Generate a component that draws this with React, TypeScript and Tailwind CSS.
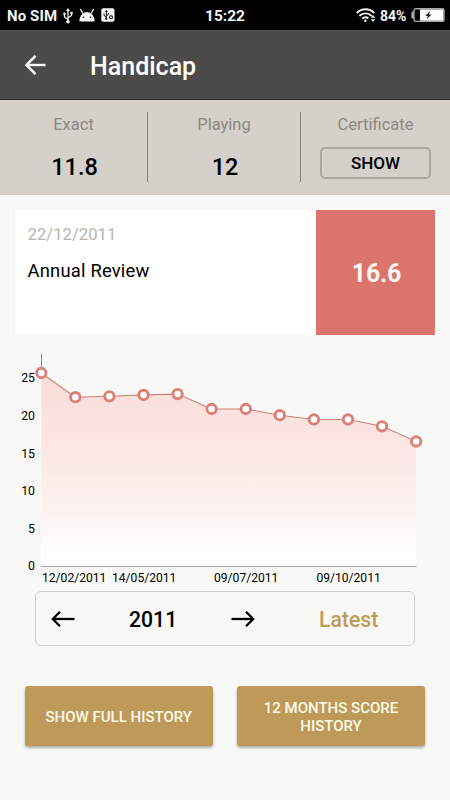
import React from 'react';

const points = [
  [41.3, 373], [75.3, 397.2], [109.4, 396.3], [143.5, 394.9], [177.6, 394.1], [211.6, 409],
  [245.8, 409], [279.8, 415.2], [313.9, 419.5], [348, 419.5], [382, 426.3], [416.2, 441.5],
];
const line = points.map((p) => `${p[0]},${p[1]}`).join(' ');
const yLabels: [string, number][] = [['25', 377.5], ['20', 415.5], ['15', 453.2], ['10', 490.7], ['5', 528.2], ['0', 565.7]];
const xLabels: [string, number][] = [['12/02/2011', 74.2], ['14/05/2011', 144.2], ['09/07/2011', 246.2], ['09/10/2011', 348.6]];

function Arrow({ className = '', width = 24, stroke = 2 }: { className?: string; width?: number; stroke?: number }) {
  return (
    <svg width={width} height="20" viewBox={`0 0 ${width} 20`} fill="none" stroke="currentColor" strokeWidth={stroke} className={className}>
      <path d={`M${width - 0.5} 10H2`} />
      <path d={width > 21 ? 'M9 2.8L1.8 10L9 17.2' : 'M10.5 0.8L1.5 10L10.5 19.2'} />
    </svg>
  );
}

function StatusBar() {
  return (
    <div className="flex h-[30px] items-center bg-black text-[15px] leading-[30px] font-bold text-[#f4f4f4]">
      <div className="flex w-[205px] items-center pl-[7px]">
        <span className="w-[56px] pt-[2px] text-[15px] tracking-[0.1px] whitespace-nowrap">No SIM</span>
        <svg width="10" height="16" viewBox="0 0 10 16" className="mt-px" fill="none" stroke="currentColor" strokeWidth="1.3">
          <path d="M5 14V2M5 11.5L1.5 9V6M5 10L8.5 7.5V5" />
          <path d="M5 0L7 3H3Z" fill="currentColor" stroke="none" />
          <circle cx="5" cy="13.8" r="1.8" fill="currentColor" stroke="none" />
          <circle cx="1.5" cy="5.8" r="1.3" fill="currentColor" stroke="none" />
          <path d="M7.3 3.8h2.4v2.4H7.3z" fill="currentColor" stroke="none" />
        </svg>
        <svg width="16" height="14" viewBox="0 0 16 14" className="ml-[6px]" fill="currentColor">
          <path d="M0.3 13.5A7.7 9.6 0 0 1 15.7 13.5Z" />
          <path d="M1.3 1L4 5.5M14.7 1L12 5.5" stroke="currentColor" strokeWidth="1.3" />
          <circle cx="4.5" cy="9.3" r="0.8" fill="#000" />
          <circle cx="11.5" cy="9.3" r="0.8" fill="#000" />
        </svg>
        <svg width="14" height="14" viewBox="0 0 14 14" className="ml-[6px]" fill="none">
          <rect x="0.3" y="0.3" width="13.2" height="13.4" rx="1.8" fill="#f4f4f4" />
          <path d="M5.3 11V3M5.3 9L3 7.4V5.5M5.3 8L7.3 6.5V5" stroke="#111" strokeWidth="1" />
          <path d="M5.3 1.8L6.7 4H3.9Z" fill="#111" />
          <circle cx="5.3" cy="10.7" r="1.1" fill="#111" />
          <circle cx="10" cy="9.2" r="1.5" stroke="#111" strokeWidth="1.1" />
        </svg>
      </div>
      <span className="w-[151px] pt-[2px] text-[15.5px]">15:22</span>
      <svg width="21" height="15" viewBox="0 0 21 15" fill="none" stroke="currentColor" strokeWidth="1.9">
        <path d="M0.8 5A12 12 0 0 1 18.2 5M3.4 8A8.5 8.5 0 0 1 15.6 8M6.2 10.7A4.8 4.8 0 0 1 12.4 10.3" />
        <circle cx="9.4" cy="12.8" r="1.3" fill="currentColor" stroke="none" />
        <path d="M17 7L19.3 9.8H14.7ZM17 14L14.7 11.2H19.3Z" fill="currentColor" stroke="none" />
      </svg>
      <span className="ml-[3px] w-[30px] pt-[2px] text-[14px] whitespace-nowrap">84%</span>
      <svg width="34" height="14" viewBox="0 0 34 14" className="ml-px" fill="none">
        <path d="M2.5 4H1V10H2.5" fill="#bbb" stroke="#bbb" />
        <rect x="3" y="0.8" width="30" height="12.6" rx="1.8" stroke="#aaa" strokeWidth="1.4" />
        <path d="M9 1.5H32.3V12.7H9Z" fill="#fff" />
        <path d="M19.2 3L14.2 7.8H17L15.5 11.2L20.6 6.4H17.8Z" fill="#111" />
      </svg>
    </div>
  );
}

function Stat({ label, value }: { label: string; value: string }) {
  return (
    <div className="flex flex-col items-center">
      <span className="mt-[3px] text-[16.5px] leading-[20px] text-[#8b8882]">{label}</span>
      <span className="mt-[18px] ml-[2px] text-[23.5px] leading-[28px] font-medium">{value}</span>
    </div>
  );
}

function Chart() {
  return (
    <svg width="450" height="240" viewBox="0 350 450 240" className="block" fontFamily="Roboto, sans-serif" fontSize="12.3">
      <defs>
        <linearGradient id="area" x1="0" y1="373" x2="0" y2="566" gradientUnits="userSpaceOnUse">
          <stop offset="0" stopColor="#fadcd7" />
          <stop offset="0.5" stopColor="#fceae8" />
          <stop offset="0.75" stopColor="#fdf5f3" />
          <stop offset="0.94" stopColor="#ffffff" />
        </linearGradient>
      </defs>
      <path d="M41.5 354V373" stroke="#888" />
      <polygon points={`41.3,566 ${line} 416.2,566`} fill="url(#area)" />
      <path d="M41 566.5H416.5" stroke="#a5a5a5" />
      <polyline points={line} fill="none" stroke="#cf8077" strokeWidth="1.1" />
      {points.map(([x, y]) => <circle key={x} cx={x} cy={y} r="4.7" fill="#fff" stroke="#db8078" strokeWidth="2.9" />)}
      {yLabels.map(([t, y]) => <text key={t} x="35" y={y + 4.4} textAnchor="end">{t}</text>)}
      {xLabels.map(([t, x]) => <text key={t} x={x} y="581.7" fontSize="12.1" textAnchor="middle">{t}</text>)}
    </svg>
  );
}

export default function App() {
  return (
    <div className="h-[800px] w-[450px] overflow-hidden bg-[#f8f8f6] font-['Roboto',sans-serif] text-black">
      <StatusBar />
      <header className="flex h-[70px] items-center border-b border-[#292927] bg-[#4b4b49] pl-[25px] text-white">
        <Arrow width={21} stroke={2.4} />
        <h1 className="mt-[5px] ml-[44px] text-[25px] leading-[30px] font-medium">Handicap</h1>
      </header>
      <section className="grid h-[95px] grid-cols-[147px_154px_149px] bg-[#d5d1ca] pt-[12px]">
        <div className="h-[75px]"><Stat label="Exact" value="11.8" /></div>
        <div className="h-[70px] border-x border-[#85827d]"><Stat label="Playing" value="12" /></div>
        <div className="flex flex-col items-center">
          <span className="mt-[3px] text-[16.5px] leading-[20px] text-[#8b8882]">Certificate</span>
          <button className="mt-[12px] h-[32px] w-[111px] rounded-[5px] border-2 border-[#aaa7a1] pt-[2px] text-[17px] font-medium">SHOW</button>
        </div>
      </section>
      <section className="mx-[15px] mt-[15px] flex h-[125px] bg-white">
        <div className="w-[301px] pt-[15px] pl-[12.5px]">
          <div className="text-[16.7px] leading-[20px] text-[#b8b5af]">22/12/2011</div>
          <div className="mt-[15px] text-[18.4px] leading-[22px] tracking-[0.2px]">Annual Review</div>
        </div>
        <div className="flex flex-1 items-center justify-center bg-[#db756c] pt-[2px] pl-[2px] text-[25px] font-bold tracking-[-0.2px] text-[#fff7f2]">16.6</div>
      </section>
      <div className="mt-[15px]"><Chart /></div>
      <nav className="mt-px ml-[35px] flex h-[55px] w-[380px] items-center rounded-[6px] border-[1.5px] border-[#cfcfcd] pl-[15px] text-[21.2px] font-medium">
        <Arrow stroke={2.3} />
        <span className="ml-[54px] w-[48px] pt-[3px]">2011</span>
        <Arrow className="ml-[54px] rotate-180" stroke={2.3} />
        <span className="ml-[64px] pt-[3px] text-[#bd9b59]">Latest</span>
      </nav>
      <div className="mt-[40px] flex gap-[24.5px] pl-[25px] text-[15px] leading-[17.5px] font-medium text-[#fffbe9]">
        <button className="h-[60px] w-[187.5px] rounded-[3px] bg-[#be9959] pt-[3px] shadow-[0_2px_3px_rgba(0,0,0,0.3)]">SHOW FULL HISTORY</button>
        <button className="h-[60px] w-[188px] rounded-[3px] bg-[#be9959] pt-[3px] shadow-[0_2px_3px_rgba(0,0,0,0.3)]">12 MONTHS SCORE<br />HISTORY</button>
      </div>
    </div>
  );
}
